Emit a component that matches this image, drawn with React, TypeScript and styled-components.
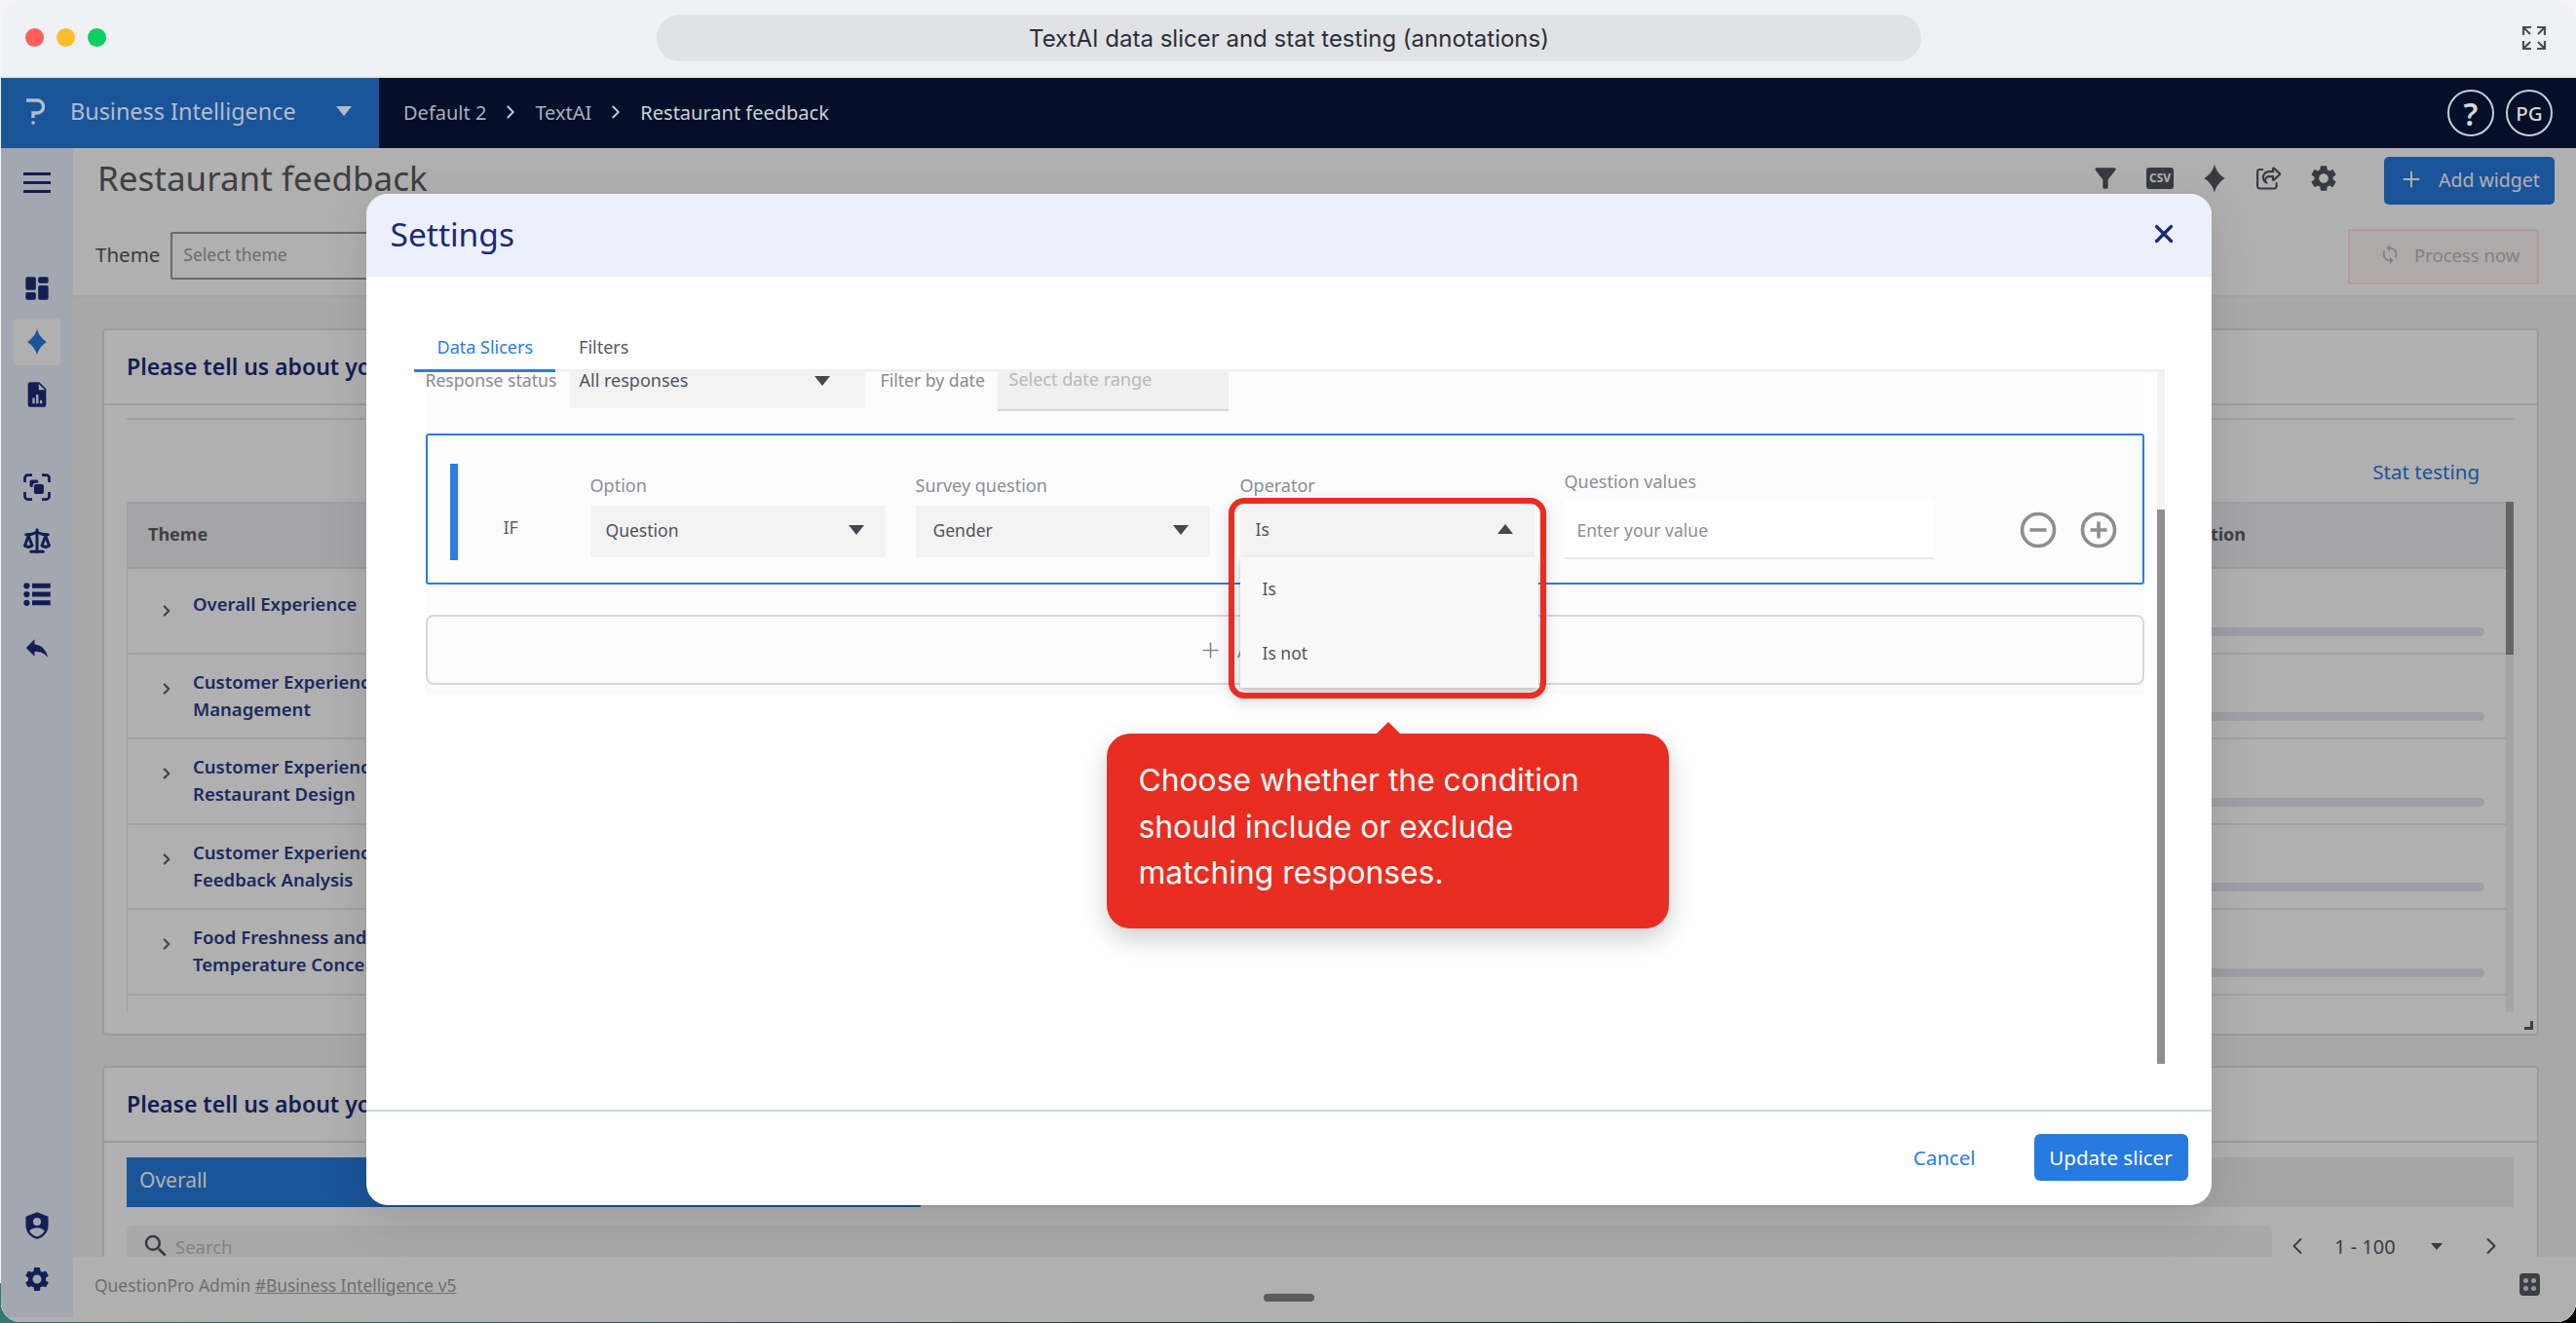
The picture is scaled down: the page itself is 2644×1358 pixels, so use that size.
import React from "react";
import styled, { createGlobalStyle } from "styled-components";
import { MdFilterAlt, MdReply, MdSearch, MdSettings, MdSync } from "react-icons/md";
import { FaRegShareFromSquare } from "react-icons/fa6";
import { ChevronLeft, ChevronRight, Plus, Scale, X } from "lucide-react";

const GlobalStyle = createGlobalStyle`
  html, body { margin: 0; padding: 0; width: 2644px; height: 1358px; overflow: hidden; }
  * { box-sizing: border-box; }
  body { font-family: "Noto Sans", "Open Sans", sans-serif; }
`;

const Stage = styled.div`
  width: 2644px;
  height: 1358px;
  padding: 0 0 1px 1px;
  background: linear-gradient(#f4f4f4 0 97%, transparent 97%), linear-gradient(90deg, #2f7a72, #000 100%);
`;

const Window = styled.div`
  position: relative;
  height: 100%;
  display: flex;
  flex-direction: column;
  border-radius: 20px;
  overflow: hidden;
  background: #fff;
`;

const TitleBar = styled.div`
  height: 80px;
  flex: none;
  display: flex;
  align-items: flex-start;
  padding-top: 15px;
  background: #f0f1f5;
  border-bottom: 2px solid #e3e4e7;
`;

const Lights = styled.div`
  display: flex;
  gap: 13px;
  margin: 14px 0 0 25px;
  width: 648px;
`;

const Light = styled.span<{ $color: string }>`
  width: 19px;
  height: 19px;
  border-radius: 50%;
  background: ${(p) => p.$color};
`;

const TitlePill = styled.div`
  width: 1298px;
  height: 48px;
  border-radius: 24px;
  background: #e1e2e6;
  display: flex;
  align-items: center;
  justify-content: center;
  font: 400 24px "Inter", sans-serif;
  color: #2c2f36;
`;

const ExpandIcon = styled.svg`
  width: 26px;
  height: 26px;
  margin: 11px 0 0 616px;
`;

const TopNav = styled.div`
  height: 72px;
  flex: none;
  display: flex;
  background: #050f2a;
`;

const Brand = styled.div`
  width: 388px;
  display: flex;
  align-items: center;
  padding-bottom: 5px;
  background: #1a5499;
  color: #b4bccb;
  font-size: 23.4px;
`;

const BrandLogo = styled.svg`
  width: 20px;
  height: 30px;
  margin: 0 26px 0 25px;
`;

const BrandCaret = styled.span`
  width: 0;
  height: 0;
  margin-left: 41px;
  border-left: 8px solid transparent;
  border-right: 8px solid transparent;
  border-top: 10px solid #b4bccb;
`;

const Crumbs = styled.div`
  display: flex;
  align-items: center;
  gap: 14px;
  margin-left: 25px;
  padding-bottom: 2px;
  font-size: 20px;
  color: #a9b0bb;
`;

const CrumbCurrent = styled.span`
  color: #cdd1d8;
`;

const NavRight = styled.div`
  margin-left: auto;
  margin-right: 24px;
  display: flex;
  align-items: center;
  gap: 12px;
`;

const RoundBadge = styled.div<{ $large?: boolean }>`
  width: 48px;
  height: 48px;
  border-radius: 50%;
  border: 2px solid #c9ccd3;
  display: flex;
  align-items: center;
  justify-content: center;
  color: #d4d6db;
  font-size: ${(p) => (p.$large ? 32 : 20.5)}px;
  font-weight: ${(p) => (p.$large ? 600 : 500)};
`;

const Body = styled.div`
  position: relative;
  flex: 1;
  min-height: 0;
  display: flex;
  background: #fff;
`;

const Sidebar = styled.aside`
  width: 74px;
  height: 1200px;
  flex: none;
  display: flex;
  flex-direction: column;
  align-items: center;
  padding: 11px 0 15px;
  background: #ecf2ff;
  color: #1d2c7c;
`;

const SideGroup = styled.div<{ $top?: number; $gap?: number }>`
  display: flex;
  flex-direction: column;
  gap: ${(p) => p.$gap ?? 6.5}px;
  margin-top: ${(p) => p.$top ?? 0}px;
`;

const SideGroupBottom = styled(SideGroup)`
  margin-top: auto;
`;

const SideButton = styled.div<{ $active?: boolean }>`
  width: 48px;
  height: 48px;
  border-radius: 4px;
  display: flex;
  align-items: center;
  justify-content: center;
  background: ${(p) => (p.$active ? "#fff" : "transparent")};
  color: ${(p) => (p.$active ? "#267ade" : "inherit")};
`;

const Main = styled.main`
  flex: 1;
  min-width: 0;
  display: flex;
  flex-direction: column;
`;

const PageHeader = styled.header`
  height: 153px;
  flex: none;
  padding: 8px 22px 0 25px;
  background: #fff;
  border-bottom: 2px solid #f0f0f0;
`;

const HeaderTop = styled.div`
  display: flex;
  align-items: center;
  height: 50px;
`;

const PageTitle = styled.h1`
  margin: -6px 0 0;
  font-size: 35px;
  font-weight: 400;
  color: #5b5c61;
`;

const Toolbar = styled.div`
  margin: -4px 46px 0 auto;
  display: flex;
  align-items: center;
  gap: 24px;
  color: #51555f;
`;

const ToolSlot = styled.div`
  width: 32px;
  height: 32px;
  display: flex;
  align-items: center;
  justify-content: center;
`;

const CsvBadge = styled.span`
  width: 28px;
  height: 22px;
  border-radius: 3px;
  background: #51555f;
  color: #fff;
  font-size: 12px;
  font-weight: 700;
  line-height: 22px;
  text-align: center;
`;

const AddWidget = styled.div`
  width: 175px;
  height: 49px;
  display: flex;
  align-items: center;
  gap: 15px;
  padding: 0 0 2px 15px;
  border-radius: 5px;
  background: #267ade;
  color: #fff;
  font-size: 19.5px;
`;

const HeaderBottom = styled.div`
  display: flex;
  align-items: center;
  margin-top: 25px;
  margin-left: -2px;
`;

const ThemeLabel = styled.span`
  font-size: 20.5px;
  color: #55565b;
  margin: -5px 11px 0 0;
`;

const ThemeSelect = styled.div`
  width: 500px;
  height: 49px;
  margin-top: -3px;
  display: flex;
  align-items: center;
  padding: 0 0 3px 11px;
  border: 2px solid #9a9a9a;
  border-radius: 2px;
  font-size: 17.5px;
  color: #9d9d9d;
`;

const ProcessButton = styled.div`
  margin-left: auto;
  margin-right: 16px;
  width: 196px;
  height: 57px;
  display: flex;
  align-items: center;
  gap: 14px;
  padding: 0 0 5px 30px;
  background: #fff5f6;
  border: 2px solid #ffe2e2;
  border-radius: 2px;
  font-size: 18.5px;
  color: #bababa;
`;

const Content = styled.div`
  flex: 1;
  min-height: 0;
  overflow: hidden;
  padding: 32px 38px 0 30px;
  background: #f5f5f5;
`;

const Card = styled.section<{ $height?: number }>`
  position: relative;
  height: ${(p) => (p.$height ? `${p.$height}px` : "auto")};
  margin-bottom: 31px;
  background: #fff;
  border: 2px solid #e2e2e2;
  border-radius: 4px;
`;

const CardTitle = styled.div`
  height: 77px;
  display: flex;
  align-items: center;
  padding: 0 0 2px 23px;
  font-size: 23px;
  font-weight: 600;
  color: #1d2c7c;
  border-bottom: 2px solid #e2e2e2;
`;

const CardBody = styled.div`
  padding: 13px 24px 0 23px;
`;

const Rule = styled.div`
  height: 2px;
  background: #e8e8e8;
`;

const StatRow = styled.div`
  height: 84px;
  display: flex;
  justify-content: flex-end;
  padding: 39px 35px 0 0;
  font-size: 20.5px;
  line-height: 28px;
  color: #267ade;
`;

const Table = styled.div`
  position: relative;
  height: 524px;
  overflow: hidden;
  padding-right: 8px;
  border-left: 1px solid #e6e9f3;
`;

const TableHead = styled.div`
  height: 69px;
  display: flex;
  align-items: center;
  padding-bottom: 3px;
  background: #eff0f3;
  border-top: 2px solid #e6e9f3;
  border-bottom: 2px solid #e0e3ec;
  font-size: 18px;
  font-weight: 700;
  color: #5c5f66;
`;

const HeadTheme = styled.div`
  width: 2066px;
  padding-left: 21px;
`;

const TableRow = styled.div<{ $top: number }>`
  position: relative;
  height: 87.5px;
  display: flex;
  padding-top: ${(p) => p.$top}px;
  border-bottom: 2px solid #e6e9f3;
`;

const RowTheme = styled.div`
  width: 2055px;
  display: flex;
  align-items: flex-start;
`;

const RowChevron = styled.span`
  width: 67px;
  flex: none;
  padding: 12px 0 0 31px;
  color: #5d616c;
  line-height: 0;
`;

const RowName = styled.div`
  width: 250px;
  font-size: 18.5px;
  font-weight: 600;
  line-height: 28px;
  color: #2a3d8b;
`;

const RowBar = styled.div`
  flex: 1;
  height: 9px;
  margin: auto 22px 17px 0;
  border-radius: 5px;
  background: #e4e6ef;
`;

const TableScroll = styled.div`
  position: absolute;
  top: 0;
  right: 0;
  bottom: 0;
  width: 8px;
  background: #efefef;
  &::before {
    content: "";
    display: block;
    height: 157px;
    background: #949494;
  }
`;

const ResizeGrip = styled.span`
  position: absolute;
  right: 4px;
  bottom: 4px;
  width: 9px;
  height: 9px;
  border-right: 3px solid #5b5b5b;
  border-bottom: 3px solid #5b5b5b;
`;

const TabStrip = styled.div`
  height: 51px;
  margin-top: 2px;
  display: flex;
  background: #efefef;
`;

const ActiveTab = styled.div`
  width: 815px;
  display: flex;
  align-items: center;
  padding: 0 0 5px 13px;
  background: #267ade;
  color: #fff;
  font-size: 21px;
`;

const SearchRow = styled.div`
  display: flex;
  align-items: center;
  margin-top: 19px;
`;

const SearchBox = styled.div`
  width: 2202px;
  height: 46px;
  display: flex;
  align-items: center;
  gap: 5px;
  padding: 0 0 4px 15px;
  border-radius: 6px;
  background: #f4f4f4;
  font-size: 18.5px;
  color: #bcbcbc;
  svg { color: #4f525a; }
`;

const Pager = styled.div`
  display: flex;
  align-items: center;
  margin-left: 12px;
  padding-bottom: 4px;
  font-size: 20px;
  color: #55585f;
`;

const PagerRange = styled.span`
  margin: 0 36px 0 24px;
`;

const PagerCaret = styled.span`
  width: 0;
  height: 0;
  margin-right: 36px;
  border-left: 6px solid transparent;
  border-right: 6px solid transparent;
  border-top: 7px solid #55585f;
`;

const Footer = styled.footer`
  height: 67px;
  flex: none;
  display: flex;
  align-items: center;
  justify-content: space-between;
  padding: 0 37px 10px 22px;
  background: #fff;
  font-size: 17.4px;
  color: #a0a0a0;
  a { color: inherit; }
`;

const FooterMark = styled.span`
  width: 21px;
  height: 23px;
  border-radius: 4px;
  background: #565a63;
  display: grid;
  grid-template-columns: 5px 5px;
  gap: 3px;
  place-content: center;
  i { height: 5px; border-radius: 50%; background: #ddd; }
`;

const HomeBar = styled.span`
  position: absolute;
  left: 1296px;
  bottom: 21px;
  width: 52px;
  height: 8px;
  border-radius: 4px;
  background: #5b5b5b;
  z-index: 3;
`;

const Overlay = styled.div`
  position: absolute;
  inset: 0;
  display: flex;
  justify-content: center;
  align-items: flex-start;
  padding-top: 47px;
  background: rgba(0, 0, 0, 0.31);
`;

const Modal = styled.div`
  width: 1894px;
  height: 1038px;
  display: flex;
  flex-direction: column;
  overflow: hidden;
  border-radius: 22px;
  background: #fff;
  box-shadow: 0 12px 50px rgba(0, 0, 0, 0.12);
`;

const ModalHead = styled.div`
  height: 85px;
  flex: none;
  display: flex;
  align-items: center;
  justify-content: space-between;
  padding: 0 34px 3px 25px;
  background: #ebf0fa;
  color: #1c2a78;
  font-size: 33.5px;
`;

const ModalBody = styled.div`
  flex: 1;
  min-height: 0;
  padding: 49px 48px 0 49px;
`;

const Tabs = styled.div`
  display: flex;
  height: 49px;
  border-bottom: 3px solid #f0f0f0;
`;

const Tab = styled.div<{ $active?: boolean }>`
  height: 49px;
  padding: 7px 23px 0 24px;
  font-size: 18px;
  line-height: 32px;
  color: ${(p) => (p.$active ? "#2a7de1" : "#555963")};
  border-bottom: 3px solid ${(p) => (p.$active ? "#2a7de1" : "transparent")};
`;

const ScrollPane = styled.div`
  position: relative;
  height: 710px;
  display: flex;
  overflow: hidden;
`;

const PaneContent = styled.div`
  width: 1764px;
  height: 330px;
  margin-left: 12px;
  background: #fcfcfc;
`;

const PaneScroll = styled.div`
  position: absolute;
  top: 0;
  right: 0;
  bottom: 0;
  width: 8px;
  padding-top: 141px;
  background: #f3f3f3;
  &::before {
    content: "";
    display: block;
    height: 100%;
    background: #8f8f8f;
  }
`;

const FilterRow = styled.div`
  display: flex;
  height: 40px;
  font-size: 17.6px;
  line-height: 16px;
  white-space: nowrap;
`;

const FilterLabel = styled.span<{ $width: number; $offset?: number }>`
  width: ${(p) => p.$width}px;
  flex: none;
  margin-left: ${(p) => p.$offset ?? 0}px;
  color: #888b91;
`;

const Select = styled.div<{ $width: number; $height: number; $inset: number }>`
  position: relative;
  width: ${(p) => p.$width}px;
  height: ${(p) => p.$height}px;
  flex: none;
  display: flex;
  align-items: center;
  justify-content: space-between;
  padding: 0 22px 3px ${(p) => p.$inset}px;
  background: #f3f3f3;
  font-size: 17.5px;
  color: #50535b;
`;

const FilterSelect = styled(Select)`
  align-items: flex-start;
  padding-right: 36px;
  font-size: 18px;
  line-height: 16px;
`;

const DateBox = styled.div`
  width: 237px;
  height: 40px;
  flex: none;
  padding-left: 12px;
  background: #f0f0f0;
  border-bottom: 2px solid #d6d6d6;
  font-size: 18px;
  line-height: 14px;
  color: #b8b8b8;
`;

const Caret = styled.span<{ $up?: boolean }>`
  width: 0;
  height: 0;
  flex: none;
  border-left: 8px solid transparent;
  border-right: 8px solid transparent;
  ${(p) => (p.$up ? "border-bottom: 10px solid #44474d;" : "border-top: 10px solid #44474d;")}
`;

const FilterCaret = styled(Caret)`
  margin-top: 4px;
`;

const ConditionCard = styled.div`
  height: 155px;
  margin-top: 23px;
  display: flex;
  align-items: flex-end;
  padding-bottom: 26px;
  background: #fcfcfc;
  border: 2px solid #2a7de1;
  border-radius: 3px;
`;

const ConditionBar = styled.span`
  width: 8px;
  height: 99px;
  flex: none;
  margin: 0 0 -3px 23px;
  background: #2a7de1;
`;

const IfLabel = styled.span`
  width: 89px;
  flex: none;
  margin: 0 0 20px 47px;
  font-size: 18px;
  line-height: 22px;
  color: #5a5d64;
`;

const Fields = styled.div`
  display: flex;
  align-items: flex-end;
  gap: 31px;
`;

const Field = styled.div<{ $width: number; $drop?: number }>`
  width: ${(p) => p.$width}px;
  flex: none;
  margin-bottom: ${(p) => p.$drop ?? 0}px;
`;

const FieldLabel = styled.div<{ $gap: number }>`
  margin-bottom: ${(p) => p.$gap}px;
  font-size: 18px;
  line-height: 22px;
  color: #8b8e94;
`;

const ValueInput = styled.div`
  height: 61px;
  display: flex;
  align-items: center;
  padding: 3px 0 0 13px;
  background: #fff;
  border-bottom: 2px solid #e8e8e8;
  font-size: 17.5px;
  color: #8b8e94;
`;

const RoundActions = styled.div`
  display: flex;
  gap: 24px;
  margin: 0 0 9px 89px;
`;

const RoundIcon = styled.svg`
  width: 38px;
  height: 38px;
  fill: none;
  stroke: #8e8e8e;
`;

const AddCard = styled.div`
  height: 72px;
  margin-top: 31px;
  display: flex;
  align-items: center;
  justify-content: center;
  gap: 15px;
  padding-right: 6px;
  border: 2px solid #d8d8d8;
  border-radius: 8px;
  font-size: 20px;
  color: #85888e;
`;

const Menu = styled.div`
  position: absolute;
  top: 100%;
  left: 0;
  width: 306px;
  height: 134px;
  z-index: 2;
  padding-left: 23px;
  background: #f9f9f9;
  box-shadow: 0 4px 8px rgba(0, 0, 0, 0.25);
  font-size: 17.5px;
  color: #50535b;
`;

const MenuItem = styled.div`
  height: 66px;
  display: flex;
  align-items: center;
  padding-bottom: 3px;
`;

const Highlight = styled.span`
  position: absolute;
  top: -6px;
  left: -12px;
  width: 326px;
  height: 206px;
  z-index: 3;
  border: 6px solid #e92d21;
  border-radius: 16px;
  box-shadow: 0 4px 14px rgba(0, 0, 0, 0.14);
  pointer-events: none;
`;

const Callout = styled.div`
  position: absolute;
  top: 236px;
  left: -137px;
  width: 577px;
  height: 200px;
  z-index: 3;
  padding: 24px 60px 0 33px;
  border-radius: 24px;
  background: #e92d21;
  box-shadow: 0 10px 26px rgba(0, 0, 0, 0.2);
  font: 400 31.8px/47.5px "Inter", sans-serif;
  color: #fff;
  &::before {
    content: "";
    position: absolute;
    top: -12px;
    left: 277px;
    border-left: 12px solid transparent;
    border-right: 12px solid transparent;
    border-bottom: 12px solid #e92d21;
  }
`;

const ModalFoot = styled.div`
  height: 98px;
  flex: none;
  display: flex;
  align-items: center;
  justify-content: flex-end;
  gap: 60px;
  padding: 0 24px 2px 0;
  border-top: 2px solid #c7d4f5;
  font-size: 20.5px;
`;

const CancelLink = styled.span`
  color: #2a7de1;
`;

const UpdateButton = styled.span`
  width: 158px;
  height: 48px;
  display: flex;
  align-items: center;
  justify-content: center;
  border-radius: 6px;
  background: #277ae0;
  color: #fff;
`;

const DashboardIcon = () => (
  <svg width="28" height="28" viewBox="0 0 24 24" fill="currentColor">
    <rect x="2" y="2" width="9" height="11.5" rx="1.5" />
    <rect x="2" y="15.5" width="9" height="6.5" rx="1.5" />
    <rect x="13" y="2" width="9" height="5.5" rx="1.5" />
    <rect x="13" y="9.5" width="9" height="12.5" rx="1.5" />
  </svg>
);

const SparkIcon = ({ size = 28 }: { size?: number }) => (
  <svg width={size} height={size} viewBox="0 0 24 24" fill="currentColor">
    <path d="M12 .5c1 4.200 3.600 8.300 8.500 11.500-4.900 3.200-7.500 7.300-8.500 11.500C11 19.300 8.400 15.200 3.500 12 8.400 8.800 11 4.700 12 .5z" />
  </svg>
);

const ReportIcon = () => (
  <svg width="28" height="28" viewBox="0 0 24 24" fill="currentColor">
    <path d="M6 1h8l6 6v14a2 2 0 0 1-2 2H6a2 2 0 0 1-2-2V3a2 2 0 0 1 2-2zm7.500 1.500V8h5.500zM8 15v5h2v-5zm3.200-3v8h2v-8zm3.300 5v3h2v-3z" fillRule="evenodd" />
  </svg>
);

const FocusIcon = () => (
  <svg width="30" height="30" viewBox="0 0 24 24" fill="none" stroke="currentColor" strokeWidth="2.200">
    <path d="M2 8V4.500A2.500 2.500 0 0 1 4.500 2H8M16 2h3.500A2.500 2.500 0 0 1 22 4.500V8M22 16v3.500a2.500 2.500 0 0 1-2.500 2.500H16M8 22H4.500A2.500 2.500 0 0 1 2 19.500V16" />
    <rect x="6" y="6" width="7" height="6" rx="1.500" fill="currentColor" stroke="none" />
    <rect x="9" y="9" width="9" height="9" rx="2" fill="currentColor" stroke="#ecf2ff" strokeWidth="1" />
  </svg>
);

const ListIcon = () => (
  <svg width="30" height="30" viewBox="0 0 24 24" fill="currentColor">
    <circle cx="3.500" cy="5" r="2.500" />
    <circle cx="3.500" cy="12" r="2.500" />
    <circle cx="3.500" cy="19" r="2.500" />
    <rect x="8" y="3" width="15" height="4" />
    <rect x="8" y="10" width="15" height="4" />
    <rect x="8" y="17" width="15" height="4" />
  </svg>
);

const ShieldIcon = () => (
  <svg width="28" height="30" viewBox="0 0 24 26" fill="currentColor">
    <path
      fillRule="evenodd"
      d="M12 1l10 4v8c0 6-4.300 10.500-10 12C6.300 23.500 2 19 2 13V5zm0 5a3.500 3.500 0 1 0 0 7 3.500 3.500 0 0 0 0-7zm0 9c-3 0-5.500 1.300-6.800 3 1.400 2.300 3.800 4 6.800 5 3-1 5.400-2.700 6.800-5-1.300-1.700-3.800-3-6.800-3z"
    />
  </svg>
);

const themes: { name: string; top: number }[] = [
  { name: "Overall Experience", top: 22 },
  { name: "Customer Experience Management", top: 14 },
  { name: "Customer Experience Restaurant Design", top: 14 },
  { name: "Customer Experience Feedback Analysis", top: 14 },
  { name: "Food Freshness and Temperature Concerns", top: 14 },
];

const App: React.FC = () => {
  return (
    <Stage>
      <GlobalStyle />
      <Window>
        <TitleBar>
          <Lights>
            <Light $color="#ff5f57" />
            <Light $color="#febc2e" />
            <Light $color="#0bd061" />
          </Lights>
          <TitlePill>TextAI data slicer and stat testing (annotations)</TitlePill>
          <ExpandIcon viewBox="0 0 26 26" fill="none" stroke="#4a4e57" strokeWidth="2.2">
            <path d="M2 10V2h8M2 2l7 7M16 2h8v8M24 2l-7 7M2 16v8h8M2 24l7-7M24 16v8h-8M24 24l-7-7" />
          </ExpandIcon>
        </TitleBar>
        <TopNav>
          <Brand>
            <BrandLogo viewBox="0 0 20 30" fill="none" stroke="#b4bccb" strokeWidth="3.4">
              <path d="M1 4h11a6.500 6.500 0 0 1 0 13H8v5" />
              <circle cx="8" cy="27" r="1.800" fill="#b4bccb" stroke="none" />
            </BrandLogo>
            Business Intelligence
            <BrandCaret />
          </Brand>
          <Crumbs>
            <span>Default 2</span>
            <ChevronRight size={22} color="#c5c9d0" />
            <span>TextAI</span>
            <ChevronRight size={22} color="#c5c9d0" />
            <CrumbCurrent>Restaurant feedback</CrumbCurrent>
          </Crumbs>
          <NavRight>
            <RoundBadge $large>?</RoundBadge>
            <RoundBadge>PG</RoundBadge>
          </NavRight>
        </TopNav>
        <Body>
          <Sidebar>
            <SideButton>
              <svg width="30" height="26" viewBox="0 0 30 26" fill="currentColor">
                <rect x="1" y="3" width="28" height="3" />
                <rect x="1" y="12" width="28" height="3" />
                <rect x="1" y="21" width="28" height="3" />
              </svg>
            </SideButton>
            <SideGroup $top={61}>
              <SideButton><DashboardIcon /></SideButton>
              <SideButton $active><SparkIcon /></SideButton>
              <SideButton><ReportIcon /></SideButton>
            </SideGroup>
            <SideGroup $top={46.5} $gap={7}>
              <SideButton><FocusIcon /></SideButton>
              <SideButton><Scale size={30} strokeWidth={2.4} /></SideButton>
              <SideButton><ListIcon /></SideButton>
              <SideButton><MdReply size={30} /></SideButton>
            </SideGroup>
            <SideGroupBottom $gap={7}>
              <SideButton><ShieldIcon /></SideButton>
              <SideButton><MdSettings size={30} /></SideButton>
            </SideGroupBottom>
          </Sidebar>
          <Main>
            <PageHeader>
              <HeaderTop>
                <PageTitle>Restaurant feedback</PageTitle>
                <Toolbar>
                  <ToolSlot><MdFilterAlt size={34} /></ToolSlot>
                  <ToolSlot><CsvBadge>CSV</CsvBadge></ToolSlot>
                  <ToolSlot><SparkIcon size={30} /></ToolSlot>
                  <ToolSlot><FaRegShareFromSquare size={26} /></ToolSlot>
                  <ToolSlot><MdSettings size={34} /></ToolSlot>
                </Toolbar>
                <AddWidget>
                  <Plus size={26} strokeWidth={1.8} />
                  Add widget
                </AddWidget>
              </HeaderTop>
              <HeaderBottom>
                <ThemeLabel>Theme</ThemeLabel>
                <ThemeSelect>Select theme</ThemeSelect>
                <ProcessButton>
                  <MdSync size={22} />
                  Process now
                </ProcessButton>
              </HeaderBottom>
            </PageHeader>
            <Content>
              <Card $height={726}>
                <CardTitle>Please tell us about your experience</CardTitle>
                <CardBody>
                  <Rule />
                  <StatRow>Stat testing</StatRow>
                  <Table>
                    <TableHead>
                      <HeadTheme>Theme</HeadTheme>
                      <span>Distribution</span>
                    </TableHead>
                    {themes.map((theme) => (
                      <TableRow key={theme.name} $top={theme.top}>
                        <RowTheme>
                          <RowChevron>
                            <ChevronRight size={18} strokeWidth={3} />
                          </RowChevron>
                          <RowName>{theme.name}</RowName>
                        </RowTheme>
                        <RowBar />
                      </TableRow>
                    ))}
                    <TableScroll />
                  </Table>
                </CardBody>
                <ResizeGrip />
              </Card>
              <Card>
                <CardTitle>Please tell us about your overall rating</CardTitle>
                <CardBody>
                  <TabStrip>
                    <ActiveTab>Overall</ActiveTab>
                  </TabStrip>
                  <SearchRow>
                    <SearchBox>
                      <MdSearch size={30} />
                      Search
                    </SearchBox>
                    <Pager>
                      <ChevronLeft size={28} strokeWidth={1.6} />
                      <PagerRange>1 - 100</PagerRange>
                      <PagerCaret />
                      <ChevronRight size={28} strokeWidth={1.8} />
                    </Pager>
                  </SearchRow>
                </CardBody>
              </Card>
            </Content>
            <Footer>
              <span>
                QuestionPro Admin <a href="#bi">#Business Intelligence v5</a>
              </span>
              <FooterMark>
                <i />
                <i />
                <i />
                <i />
              </FooterMark>
            </Footer>
          </Main>
          <Overlay>
            <Modal>
              <ModalHead>
                Settings
                <X size={30} strokeWidth={2.6} />
              </ModalHead>
              <ModalBody>
                <Tabs>
                  <Tab $active>Data Slicers</Tab>
                  <Tab>Filters</Tab>
                </Tabs>
                <ScrollPane>
                  <PaneContent>
                    <FilterRow>
                      <FilterLabel $width={148}>Response status</FilterLabel>
                      <FilterSelect $width={303} $height={37} $inset={10}>
                        All responses
                        <FilterCaret />
                      </FilterSelect>
                      <FilterLabel $width={120} $offset={16}>Filter by date</FilterLabel>
                      <DateBox>Select date range</DateBox>
                    </FilterRow>
                    <ConditionCard>
                      <ConditionBar />
                      <IfLabel>IF</IfLabel>
                      <Fields>
                        <Field $width={303}>
                          <FieldLabel $gap={10}>Option</FieldLabel>
                          <Select $width={303} $height={53} $inset={16}>
                            Question
                            <Caret />
                          </Select>
                        </Field>
                        <Field $width={302}>
                          <FieldLabel $gap={10}>Survey question</FieldLabel>
                          <Select $width={302} $height={53} $inset={18}>
                            Gender
                            <Caret />
                          </Select>
                        </Field>
                        <Field $width={302}>
                          <FieldLabel $gap={8}>Operator</FieldLabel>
                          <Select $width={302} $height={55} $inset={16}>
                            Is
                            <Caret $up />
                            <Menu>
                              <MenuItem>Is</MenuItem>
                              <MenuItem>Is not</MenuItem>
                            </Menu>
                            <Highlight />
                            <Callout>
                              Choose whether the condition should include or exclude matching responses.
                            </Callout>
                          </Select>
                        </Field>
                        <Field $width={378} $drop={-2}>
                          <FieldLabel $gap={8}>Question values</FieldLabel>
                          <ValueInput>Enter your value</ValueInput>
                        </Field>
                      </Fields>
                      <RoundActions>
                        <RoundIcon viewBox="0 0 38 38" strokeWidth="3.6">
                          <circle cx="19" cy="19" r="16.5" />
                          <path d="M10.500 19h17" />
                        </RoundIcon>
                        <RoundIcon viewBox="0 0 38 38" strokeWidth="3.6">
                          <circle cx="19" cy="19" r="16.500" />
                          <path d="M10.500 19h17M19 10.500v17" />
                        </RoundIcon>
                      </RoundActions>
                    </ConditionCard>
                    <AddCard>
                      <Plus size={25} strokeWidth={1.6} />
                      Add condition
                    </AddCard>
                  </PaneContent>
                  <PaneScroll />
                </ScrollPane>
              </ModalBody>
              <ModalFoot>
                <CancelLink>Cancel</CancelLink>
                <UpdateButton>Update slicer</UpdateButton>
              </ModalFoot>
            </Modal>
          </Overlay>
        </Body>
        <HomeBar />
      </Window>
    </Stage>
  );
};

export default App;
